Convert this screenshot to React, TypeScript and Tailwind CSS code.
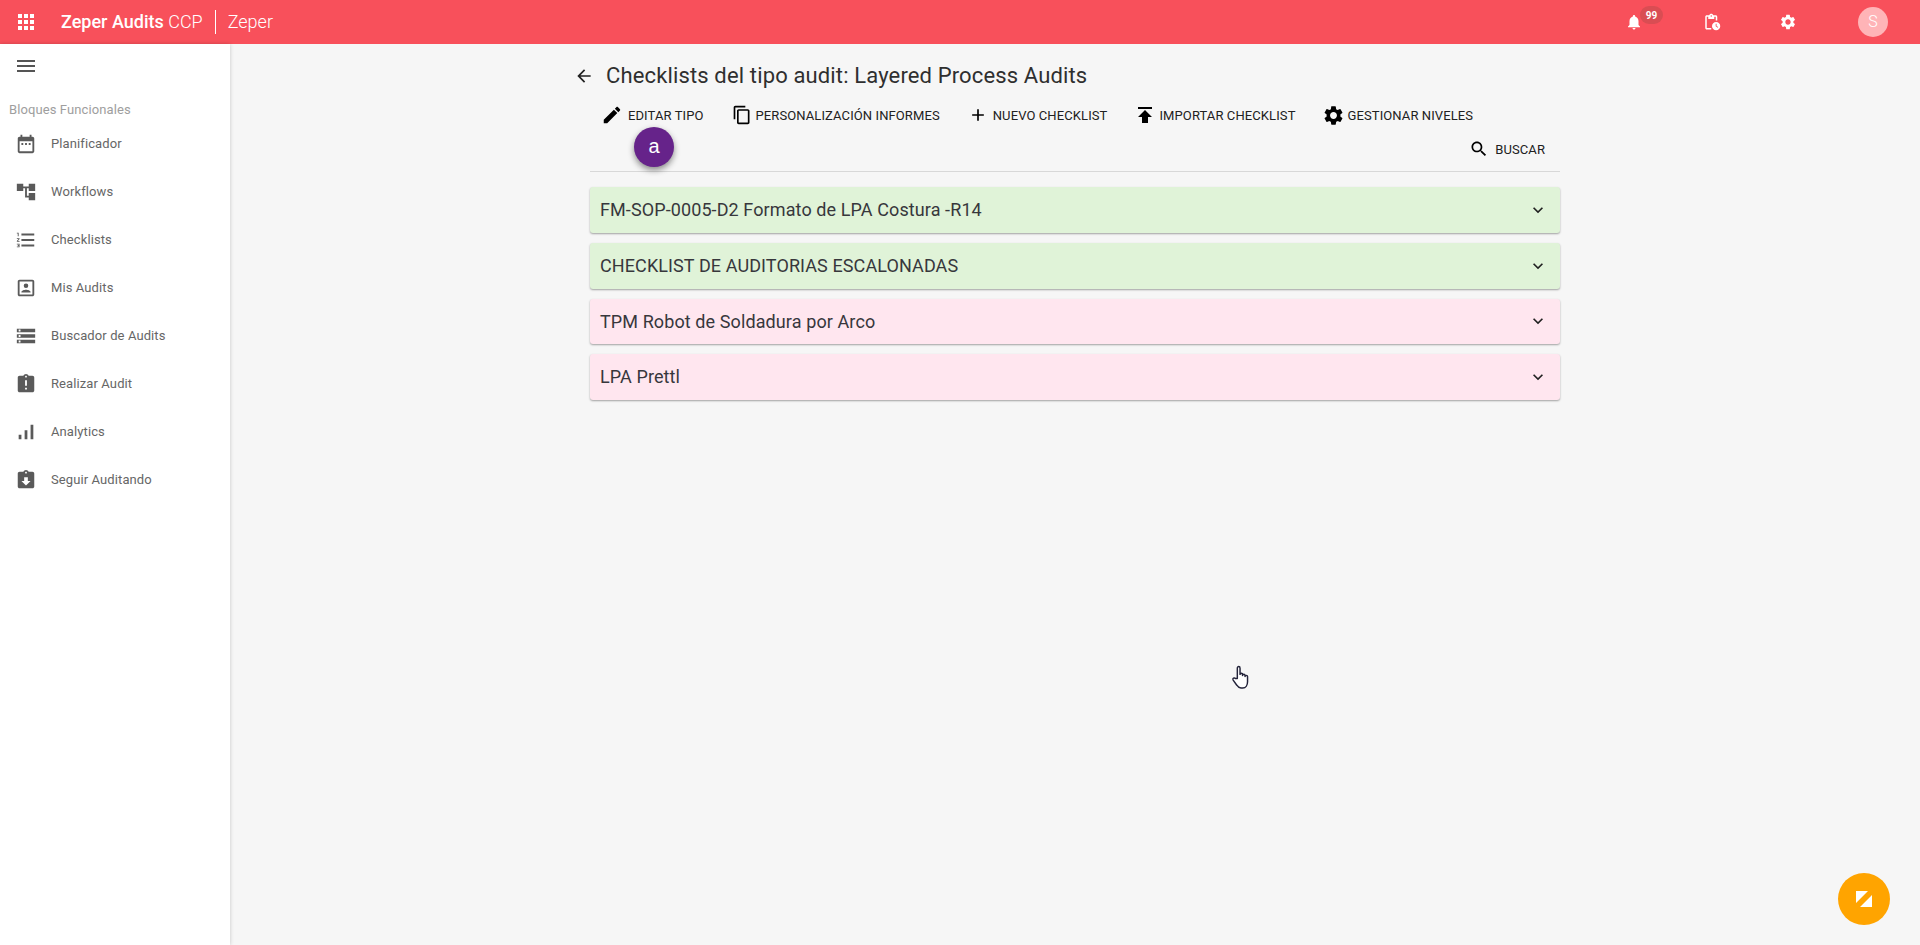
import React from 'react';

const P = {
  apps: 'M4 8h4V4H4v4zm6 12h4v-4h-4v4zm-6 0h4v-4H4v4zm0-6h4v-4H4v4zm6 0h4v-4h-4v4zm6-10v4h4V4h-4zm-6 4h4V4h-4v4zm6 6h4v-4h-4v4zm0 6h4v-4h-4v4z',
  menu: 'M3 18h18v-2H3v2zm0-5h18v-2H3v2zm0-7v2h18V6H3z',
  calendar: 'M9 11H7v2h2v-2zm4 0h-2v2h2v-2zm4 0h-2v2h2v-2zm2-7h-1V2h-2v2H8V2H6v2H5c-1.11 0-1.99.9-1.99 2L3 20c0 1.1.89 2 2 2h14c1.1 0 2-.9 2-2V6c0-1.1-.9-2-2-2zm0 16H5V9h14v11z',
  tree: 'M22 11V3h-7v3H9V3H2v8h7V8h2v10h4v3h7v-8h-7v3h-2V8h2v3z',
  numbered: 'M2 17h2v.5H3v1h1v.5H2v1h3v-4H2v1zm1-9h1V4H2v1h1v3zm-1 3h1.8L2 13.1v.9h3v-1H3.2L5 10.9V10H2v1zm5-6v2h14V5H7zm0 14h14v-2H7v2zm0-6h14v-2H7v2z',
  person: 'M19 3H5c-1.1 0-2 .9-2 2v14c0 1.1.9 2 2 2h14c1.1 0 2-.9 2-2V5c0-1.1-.9-2-2-2zm0 16H5V5h14v14zM12 12a2.5 2.5 0 100-5 2.5 2.5 0 000 5zm5 4.5c0-1.67-3.33-2.5-5-2.5s-5 .83-5 2.5V17h10v-.5z',
  storage: 'M2 20h20v-4H2v4zm2-3h2v2H4v-2zM2 4v4h20V4H2zm4 3H4V5h2v2zm-4 7h20v-4H2v4zm2-3h2v2H4v-2z',
  late: 'M19 3h-4.18C14.4 1.84 13.3 1 12 1c-1.3 0-2.4.84-2.82 2H5c-1.1 0-2 .9-2 2v14c0 1.1.9 2 2 2h14c1.1 0 2-.9 2-2V5c0-1.1-.9-2-2-2zm-6 15h-2v-2h2v2zm0-4h-2V8h2v6zm-1-9c-.55 0-1-.45-1-1s.45-1 1-1 1 .45 1 1-.45 1-1 1z',
  bars: 'M4 15h3v5H4zM10.5 10h3v10h-3zM17 4h3v16h-3z',
  returned: 'M19 3h-4.18C14.4 1.84 13.3 1 12 1c-1.3 0-2.4.84-2.82 2H5c-1.1 0-2 .9-2 2v14c0 1.1.9 2 2 2h14c1.1 0 2-.9 2-2V5c0-1.1-.9-2-2-2zm-7 0c.55 0 1 .45 1 1s-.45 1-1 1-1-.45-1-1 .45-1 1-1zm0 15l-5-5h3V9h4v4h3l-5 5z',
  edit: 'M3 17.25V21h3.75L17.81 9.94l-3.75-3.75L3 17.25zM20.71 7.04c.39-.39.39-1.02 0-1.41l-2.34-2.34c-.39-.39-1.02-.39-1.41 0l-1.83 1.83 3.75 3.75 1.83-1.83z',
  copy: 'M16 1H4c-1.1 0-2 .9-2 2v14h2V3h12V1zm3 4H8c-1.1 0-2 .9-2 2v14c0 1.1.9 2 2 2h11c1.1 0 2-.9 2-2V7c0-1.1-.9-2-2-2zm0 16H8V7h11v14z',
  add: 'M19 13h-6v6h-2v-6H5v-2h6V5h2v6h6v2z',
  publish: 'M5 4v2h14V4H5zm0 10h4v6h6v-6h4l-7-7-7 7z',
  settings: 'M19.14 12.94c.04-.3.06-.61.06-.94 0-.32-.02-.64-.07-.94l2.03-1.58a.49.49 0 00.12-.61l-1.92-3.32a.488.488 0 00-.59-.22l-2.39.96c-.5-.38-1.03-.7-1.62-.94l-.36-2.54a.484.484 0 00-.48-.41h-3.84c-.24 0-.43.17-.47.41l-.36 2.54c-.59.24-1.13.57-1.62.94l-2.39-.96c-.22-.08-.47 0-.59.22L2.74 8.87c-.12.21-.08.47.12.61l2.03 1.58c-.05.3-.09.63-.09.94s.02.64.07.94l-2.03 1.58a.49.49 0 00-.12.61l1.92 3.32c.12.22.37.29.59.22l2.39-.96c.5.38 1.03.7 1.62.94l.36 2.54c.05.24.24.41.48.41h3.84c.24 0 .44-.17.47-.41l.36-2.54c.59-.24 1.13-.56 1.62-.94l2.39.96c.22.08.47 0 .59-.22l1.92-3.32c.12-.22.07-.47-.12-.61l-2.01-1.58zM12 15.6c-1.98 0-3.6-1.62-3.6-3.6s1.62-3.6 3.6-3.6 3.6 1.62 3.6 3.6-1.62 3.6-3.6 3.6z',
  search: 'M15.5 14h-.79l-.28-.27C15.41 12.59 16 11.11 16 9.5 16 5.91 13.09 3 9.5 3S3 5.91 3 9.5 5.91 16 9.5 16c1.61 0 3.09-.59 4.23-1.57l.27.28v.79l5 4.99L20.49 19l-4.99-5zm-6 0C7.01 14 5 11.99 5 9.5S7.01 5 9.5 5 14 7.01 14 9.5 11.99 14 9.5 14z',
  expand: 'M16.59 8.59L12 13.17 7.41 8.59 6 10l6 6 6-6z',
  back: 'M20 11H7.83l5.59-5.59L12 4l-8 8 8 8 1.41-1.41L7.83 13H20v-2z',
  bell: 'M12 22c1.1 0 2-.9 2-2h-4c0 1.1.89 2 2 2zm6-6v-5c0-3.07-1.64-5.64-4.5-6.32V4c0-.83-.67-1.5-1.5-1.5s-1.5.67-1.5 1.5v.68C7.63 5.36 6 7.92 6 11v5l-2 2v1h16v-1l-2-2z',
  clipboard: 'M17 3h-3.18C13.4 1.84 12.3 1 11 1c-1.3 0-2.4.84-2.82 2H5c-1.1 0-2 .9-2 2v15c0 1.1.9 2 2 2h6v-2H5V5h2v3h8V5h2v5h2V5c0-1.1-.9-2-2-2zm-6 2c-.55 0-1-.45-1-1s.45-1 1-1 1 .45 1 1-.45 1-1 1zM17.5 12a5.5 5.5 0 100 11 5.5 5.5 0 000-11zm.6 5.2l2.2 1.3-.6 1-2.8-1.7V14.2h1.2z',
};

function Icon({ d, className }: { d: string; className?: string }) {
  return (
    <svg viewBox="0 0 24 24" fill="currentColor" fillRule="evenodd" className={className}>
      <path d={d} />
    </svg>
  );
}

const NAV_ITEMS = [
  { label: 'Planificador', icon: P.calendar },
  { label: 'Workflows', icon: P.tree },
  { label: 'Checklists', icon: P.numbered },
  { label: 'Mis Audits', icon: P.person },
  { label: 'Buscador de Audits', icon: P.storage },
  { label: 'Realizar Audit', icon: P.late },
  { label: 'Analytics', icon: P.bars },
  { label: 'Seguir Auditando', icon: P.returned },
];

const CHECKLISTS = [
  { title: 'FM-SOP-0005-D2 Formato de LPA Costura -R14', bg: 'bg-[#e0f3d8]', h: 'h-[46px]', mb: 'mb-[10px]' },
  { title: 'CHECKLIST DE AUDITORIAS ESCALONADAS', bg: 'bg-[#e0f3d8]', h: 'h-[46px]', mb: 'mb-[10px]' },
  { title: 'TPM Robot de Soldadura por Arco', bg: 'bg-[#ffe6ef]', h: 'h-[45px]', mb: 'mb-[10px]' },
  { title: 'LPA Prettl', bg: 'bg-[#ffe6ef]', h: 'h-[46px]', mb: 'mb-0' },
];

function ToolButton({ icon, label, iconClass, className }: { icon: string; label: string; iconClass: string; className: string }) {
  return (
    <div className={`flex items-center text-[13px] leading-none tracking-[0.1px] text-[#212121] ${className}`}>
      <Icon d={icon} className={`shrink-0 text-black ${iconClass}`} />
      <span className="whitespace-nowrap">{label}</span>
    </div>
  );
}

export default function App() {
  return (
    <div className="flex h-[945px] flex-col overflow-hidden bg-[#f6f6f6] font-['Roboto','Liberation_Sans',sans-serif]">
      {/* barra superior */}
      <header className="flex h-[44px] shrink-0 items-center bg-[#f8505b] text-white">
        <Icon d={P.apps} className="ml-[14px] h-6 w-6" />
        <div className="ml-[23px] text-[18px] leading-none font-medium whitespace-nowrap">
          Zeper Audits <span className="font-light">CCP</span>
        </div>
        <div className="mx-[12px] h-[24px] w-px bg-white" />
        <div className="text-[18px] leading-none font-light">Zeper</div>
        <div className="ml-auto flex items-center">
          <div className="relative h-[18px] w-[18px]">
            <Icon d={P.bell} className="h-[18px] w-[18px]" />
            <span className="absolute -top-[7px] left-[15px] flex h-[18px] w-[23px] items-center justify-center rounded-full bg-[#d94d53] text-[10px] font-bold">99</span>
          </div>
          <Icon d={P.clipboard} className="ml-[60px] h-[18px] w-[18px]" />
          <Icon d={P.settings} className="ml-[58px] h-[18px] w-[18px]" />
          <div className="mr-[32px] ml-[61px] flex h-[30px] w-[30px] items-center justify-center rounded-full bg-[#ffb4b7] text-[16px] font-light">S</div>
        </div>
      </header>

      <div className="flex min-h-0 flex-1">
        {/* menu lateral */}
        <aside className="w-[230px] shrink-0 bg-white shadow-[0_0_4px_rgba(0,0,0,0.2)]">
          <Icon d={P.menu} className="mt-[10px] ml-[14px] h-6 w-6 text-[#555]" />
          <div className="mt-[25px] ml-[9px] text-[13px] leading-[14px] tracking-[0.1px] text-[#9e9e9e]">Bloques Funcionales</div>
          <nav className="mt-[3px]">
            {NAV_ITEMS.map((item) => (
              <div key={item.label} className="flex h-[48px] items-center pl-[15px] text-[13px] tracking-[0.1px] text-[#666]">
                <Icon d={item.icon} className="h-[22px] w-[22px] shrink-0 text-[#5a5a5a]" />
                <span className="ml-[14px]">{item.label}</span>
              </div>
            ))}
          </nav>
        </aside>

        {/* contenido */}
        <main className="flex-1">
          <div className="mx-auto w-[970px]">
            <div className="mt-[18px] -ml-[16px] flex h-[28px] items-center">
              <Icon d={P.back} className="h-[20px] w-[20px] shrink-0 text-[#212121]" />
              <h1 className="ml-[12px] text-[22px] leading-none font-normal tracking-[0.14px] whitespace-nowrap text-[#2f2f2f]">
                Checklists del tipo audit: Layered Process Audits
              </h1>
            </div>

            <div className="relative mt-[13px] flex h-[24px] items-center pl-[11px]">
              <ToolButton icon={P.edit} label="EDITAR TIPO" iconClass="h-[22px] w-[22px] mr-[5px]" className="" />
              <ToolButton icon={P.copy} label="PERSONALIZACIÓN INFORMES" iconClass="h-[20px] w-[20px] mr-[4px]" className="ml-[28px]" />
              <ToolButton icon={P.add} label="NUEVO CHECKLIST" iconClass="h-5 w-5 mr-[5px]" className="ml-[28px]" />
              <ToolButton icon={P.publish} label="IMPORTAR CHECKLIST" iconClass="h-6 w-6 mr-[2px]" className="ml-[26px]" />
              <ToolButton icon={P.settings} label="GESTIONAR NIVELES" iconClass="h-[23px] w-[23px] mr-[3px]" className="ml-[26px]" />
              <div className="absolute top-[24px] left-[44px] flex h-[40px] w-[40px] items-center justify-center rounded-full bg-[#66238a] pb-[2px] font-['Liberation_Sans',sans-serif] text-[20px] text-white shadow-[0_3px_6px_rgba(0,0,0,0.45)]">a</div>
            </div>

            <div className="mt-[11px] flex h-[22px] items-center justify-end pr-[15px]">
              <ToolButton icon={P.search} label="BUSCAR" iconClass="h-5 w-5 mr-[6px]" className="" />
            </div>

            <div className="mt-[11px] mb-[15px] h-px bg-[#d8d8d8]" />

            {CHECKLISTS.map((item) => (
              <div key={item.title} className={`flex items-center justify-between rounded-[3px] pr-[12px] pb-[1px] pl-[10px] text-[#37373c] shadow-[0_1px_2px_rgba(0,0,0,0.35)] ${item.bg} ${item.h} ${item.mb}`}>
                <span className="text-[18px] tracking-[0.1px]">{item.title}</span>
                <Icon d={P.expand} className="h-5 w-5 text-[#212121]" />
              </div>
            ))}
          </div>
        </main>
      </div>

      {/* cursor de la captura */}
      <svg viewBox="0 0 20 24" className="fixed top-[665px] left-[1231px] h-[25px] w-[21px]" fill="#fff" stroke="#23233a" strokeWidth="1.4" strokeLinejoin="round">
        <path d="M6 13V3c0-2 2.6-2 2.6 0v6c0-1.5 2.4-1.5 2.4 0v1c0-1.5 2.4-1.5 2.4 0v1c0-1.4 2.4-1.4 2.4 0v5c0 3-1.6 6-4.6 6H9.5c-2 0-3-1-4-2.6L2 14.5c-1-1.6 1-2.8 2.2-1.6z" />
      </svg>

      {/* boton de ayuda */}
      <div className="fixed top-[873px] left-[1838px] flex h-[52px] w-[52px] items-center justify-center rounded-full bg-[#ffa400]">
        <svg viewBox="0 0 16 16" className="h-[16px] w-[16px]" fill="#fff">
          <path d="M0 0h12L0 12zM16 4v12H4z" />
        </svg>
      </div>
    </div>
  );
}
